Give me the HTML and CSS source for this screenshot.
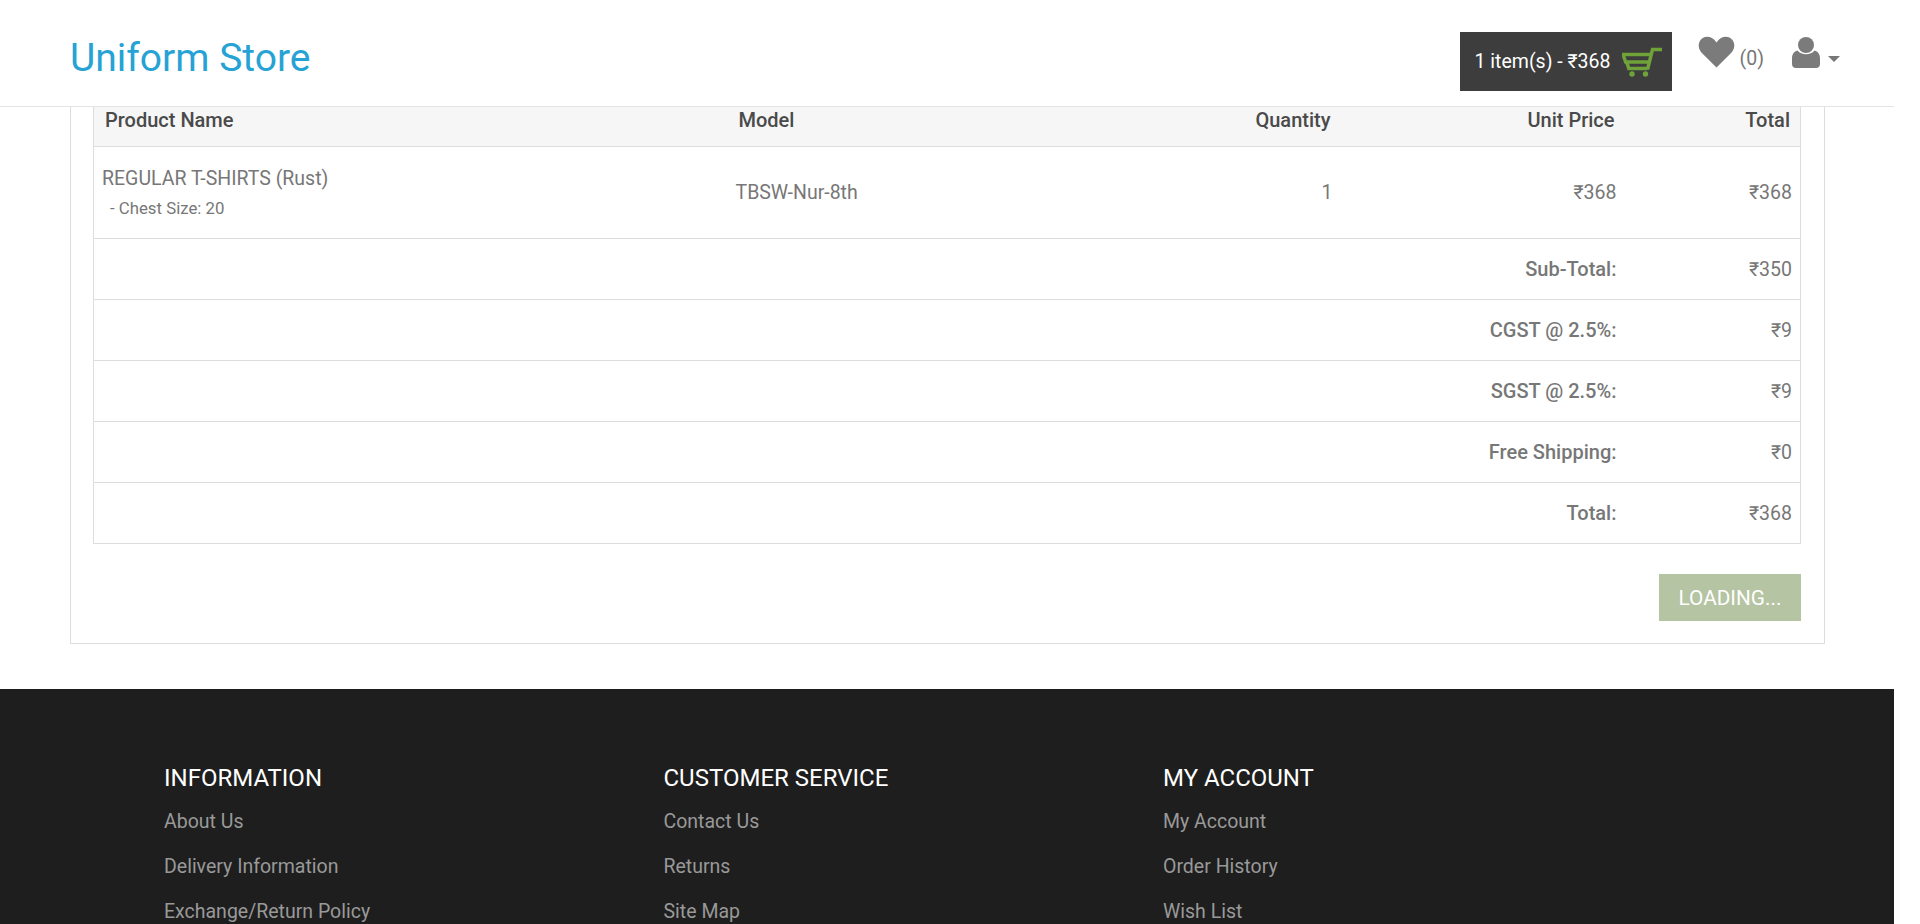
FILE: index.html
```html
<!DOCTYPE html>
<html lang="en">
<head>
    <meta charset="UTF-8">
    <meta name="viewport" content="width=device-width, initial-scale=1.0">
    <title>Uniform Store</title>
    <link rel="stylesheet" href="styles.css">
</head>
<body>
    <div class="page">
        <header class="topbar">
            <a class="logo" href="#">Uniform Store</a>
            <div class="top-actions">
                <a class="cart-btn" href="#">
                    <span>1 item(s) - ₹368</span>
                    <svg class="cart-icon" viewBox="0 0 40 30" width="40" height="30">
                        <g fill="none" stroke="#6fa33a" stroke-width="3.5">
                            <path d="M0 7.500h29.500"/>
                            <path d="M1.200 8l2.500 7h23"/>
                            <path d="M4.800 15l2 6.500h18.700"/>
                            <path d="M25.500 22.500L30.500 2.500H40"/>
                        </g>
                        <circle cx="10" cy="27" r="2.700" fill="#6fa33a"/>
                        <circle cx="23.500" cy="27" r="2.700" fill="#6fa33a"/>
                    </svg>
                </a>
                <a class="wish" href="#">
                    <svg viewBox="0 0 36 32" width="37" height="32">
                        <path d="M18 31.500L3.400 17C-1 12.600-.6 6.200 3 3 7-.6 13.400 0 18 6.400 22.600 0 29-.6 33 3c3.600 3.200 4 9.600-.4 14z" fill="#7b7b7b"/>
                    </svg>
                    <span class="wish-count">(0)</span>
                </a>
                <a class="account" href="#">
                    <svg viewBox="0 0 28 31" width="28" height="31">
                        <circle cx="14" cy="8" r="8" fill="#7b7b7b"/>
                        <path d="M5.500 13.500c2 2.500 5 3.800 8.500 3.800s6.500-1.300 8.500-3.800c3.500 1 5.500 3.800 5.500 8v5.500c0 2.500-1.500 4-4 4H4c-2.500 0-4-1.500-4-4v-5.500c0-4.200 2-7 5.500-8z" fill="#7b7b7b"/>
                    </svg>
                    <span class="caret"></span>
                </a>
            </div>
        </header>

        <main class="panel">
            <table class="order">
                <thead>
                    <tr>
                        <th class="col-name">Product Name</th>
                        <th class="col-model">Model</th>
                        <th class="col-qty">Quantity</th>
                        <th class="col-price">Unit Price</th>
                        <th class="col-total">Total</th>
                    </tr>
                </thead>
                <tbody>
                    <tr class="item">
                        <td>REGULAR T-SHIRTS (Rust)<small>- Chest Size: 20</small></td>
                        <td>TBSW-Nur-8th</td>
                        <td class="num">1</td>
                        <td class="num">₹368</td>
                        <td class="num">₹368</td>
                    </tr>
                    <tr class="sum"><td colspan="4">Sub-Total:</td><td>₹350</td></tr>
                    <tr class="sum"><td colspan="4">CGST @ 2.5%:</td><td>₹9</td></tr>
                    <tr class="sum"><td colspan="4">SGST @ 2.5%:</td><td>₹9</td></tr>
                    <tr class="sum"><td colspan="4">Free Shipping:</td><td>₹0</td></tr>
                    <tr class="sum"><td colspan="4">Total:</td><td>₹368</td></tr>
                </tbody>
            </table>
            <div class="confirm">
                <button class="loading">LOADING...</button>
            </div>
        </main>

        <footer class="footer">
            <div class="foot-col">
                <h5>INFORMATION</h5>
                <a href="#">About Us</a>
                <a href="#">Delivery Information</a>
                <a href="#">Exchange/Return Policy</a>
            </div>
            <div class="foot-col">
                <h5>CUSTOMER SERVICE</h5>
                <a href="#">Contact Us</a>
                <a href="#">Returns</a>
                <a href="#">Site Map</a>
            </div>
            <div class="foot-col">
                <h5>MY ACCOUNT</h5>
                <a href="#">My Account</a>
                <a href="#">Order History</a>
                <a href="#">Wish List</a>
            </div>
        </footer>
    </div>
</body>
</html>
```
FILE: styles.css
```css
html, body{
    margin: 0;
    height: 924px;
    overflow: hidden;
    background-color: #fff;
}
a{
    text-decoration: none;
}
.page{
    width: 1894px;
    font-family: Roboto, "Noto Sans", sans-serif;
    font-size: 19.5px;
    color: #777;
}

/* header */
.topbar{
    display: flex;
    justify-content: space-between;
    height: 106px;
    padding: 0 54px 0 70px;
    border-bottom: 1px solid #e4e4e4;
}
.logo{
    margin-top: 33px;
    font-size: 39px;
    line-height: 50px;
    color: #26a3d4;
}
.top-actions{
    display: flex;
    align-items: flex-start;
    padding-top: 32px;
}
.cart-btn{
    display: flex;
    align-items: center;
    gap: 12px;
    width: 212px;
    height: 59px;
    padding-left: 15px;
    box-sizing: border-box;
    background-color: #3d3d3d;
    color: #fff;
}
.wish{
    display: flex;
    align-items: flex-end;
    gap: 5px;
    margin: 4px 0 0 26px;
    color: #777;
}
.wish-count{
    margin-bottom: -2px;
}
.account{
    display: flex;
    align-items: center;
    gap: 8px;
    margin: 5px 0 0 28px;
}
.caret{
    margin-top: 13px;
    border-top: 6px solid #777;
    border-left: 6px solid transparent;
    border-right: 6px solid transparent;
}

/* order table */
.panel{
    margin: 0 69px 0 70px;
    padding: 0 23px 22px 22px;
    border: 1px solid #ddd;
    border-top: 0;
}
.order{
    width: calc(100% - 1px);
    table-layout: fixed;
    border-collapse: collapse;
    border: 1px solid #ddd;
    border-top: 0;
}
.order th, .order td{
    padding: 0 8px;
    border-bottom: 1px solid #ddd;
}
.order thead tr{
    height: 39px;
    background-color: #f6f6f6;
}
.order th{
    box-sizing: border-box;
    padding: 1px 10px 0;
    color: #4a4a4a;
    font-size: 20px;
    font-weight: 500;
    vertical-align: top;
}
.order th.col-name{
    width: 635px;
    padding-left: 11px;
    text-align: left;
}
.col-model{
    width: 470px;
    text-align: left;
}
.col-qty, .col-price, .col-total{
    text-align: right;
}
.col-qty{
    width: 142px;
}
.col-price{
    width: 284px;
}
.order th.col-total{
    width: 176px;
    padding-right: 10px;
}
.item{
    height: 92px;
}
.item td:nth-child(2){
    padding-left: 7px;
}
.order td small{
    display: block;
    margin: 8px 0 0 8px;
    font-size: 16.8px;
}
.num{
    text-align: right;
}
.sum{
    height: 61px;
    text-align: right;
}
.sum td:first-child{
    font-size: 20px;
    font-weight: 500;
}
.sum td:last-child{
    padding-top: 2px;
}
.confirm{
    display: flex;
    justify-content: flex-end;
    margin-top: 30px;
}
.loading{
    width: 142px;
    height: 47px;
    padding: 1px 0 0;
    border: 0;
    background-color: #b5c4a2;
    color: #fff;
    font-family: inherit;
    font-size: 20.8px;
}

/* footer */
.footer{
    display: grid;
    grid-template-columns: repeat(3, 499.5px);
    margin-top: 45px;
    padding: 73px 0 0 164px;
    height: 400px;
    background-color: #1e1e1e;
}
.foot-col h5{
    margin: 0 0 5px;
    color: #fff;
    font-size: 24px;
    font-weight: 400;
    line-height: 32px;
}
.foot-col a{
    display: block;
    color: #999;
    line-height: 45px;
}
```
